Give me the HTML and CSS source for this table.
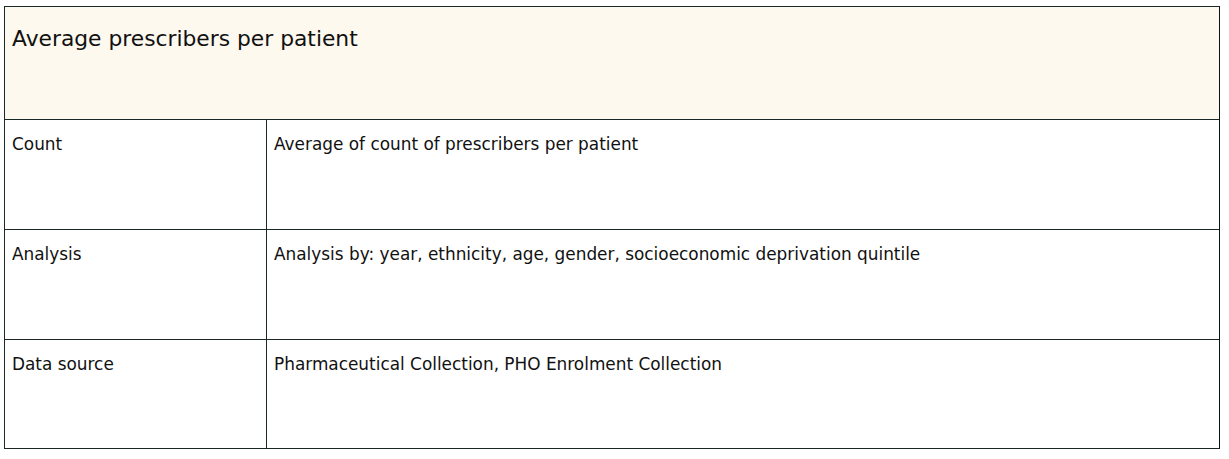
FILE: index.html
```html
<!DOCTYPE html>
<html lang="en">
<head>
<meta charset="utf-8">
<title>Average prescribers per patient</title>
<link rel="stylesheet" href="styles.css">
</head>
<body>
<div class="page">
  <div class="spec">
    <div class="spec-head">Average prescribers per patient</div>
    <div class="spec-row">
      <div class="spec-label">Count</div>
      <div class="spec-value">Average of count of prescribers per patient</div>
    </div>
    <div class="spec-row">
      <div class="spec-label">Analysis</div>
      <div class="spec-value">Analysis by: year, ethnicity, age, gender, socioeconomic deprivation quintile</div>
    </div>
    <div class="spec-row spec-row-last">
      <div class="spec-label">Data source</div>
      <div class="spec-value">Pharmaceutical Collection, PHO Enrolment Collection</div>
    </div>
  </div>
</div>
</body>
</html>
```
FILE: styles.css
```css
html, body {
  margin: 0;
  padding: 0;
  background: #ffffff;
}

.page {
  padding: 6px 0 0 4px;
}

.spec {
  width: 1216px;
  box-sizing: border-box;
  border: 1px solid #1b2828;
  border-right-color: #0d1414;
  font-family: "DejaVu Sans", sans-serif;
  color: #111111;
  display: flex;
  flex-direction: column;
}

.spec-head {
  background: #fdf9ef;
  height: 113px;
  box-sizing: border-box;
  padding: 19px 7px 0;
  font-size: 21.8px;
  line-height: 26px;
  border-bottom: 1px solid #1b2828;
}

.spec-row {
  display: grid;
  grid-template-columns: 262px 1fr;
  height: 110px;
  box-sizing: border-box;
  border-bottom: 1px solid #1b2828;
  font-size: 16.9px;
  line-height: 20px;
}

.spec-row-last {
  border-bottom: none;
  height: 108px;
}

.spec-label {
  border-right: 1px solid #1b2828;
  padding: 14px 7px 0;
}

.spec-value {
  padding: 14px 7px 0;
}
```
